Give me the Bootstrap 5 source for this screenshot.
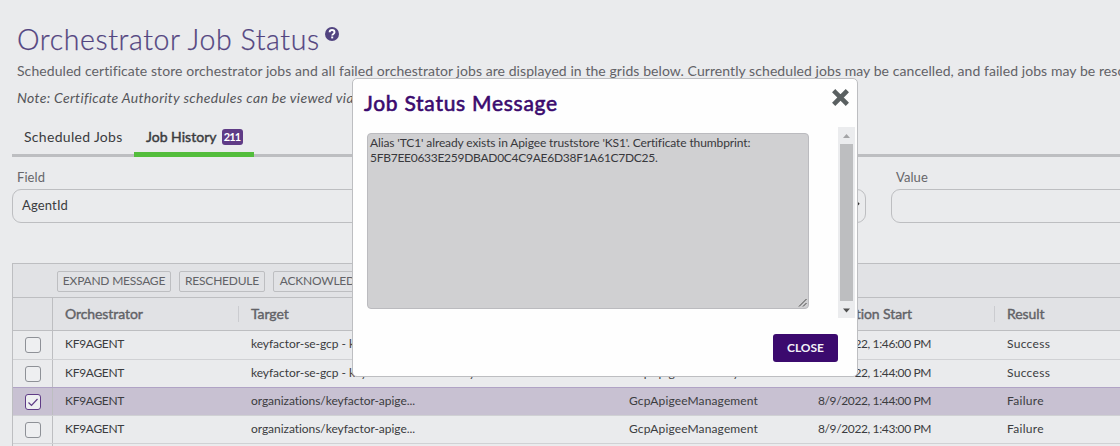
<!DOCTYPE html>
<html lang="en">
<head>
<meta charset="utf-8">
<title>Orchestrator Job Status</title>
<link href="https://cdn.jsdelivr.net/npm/bootstrap@5.3.0/dist/css/bootstrap.min.css" rel="stylesheet">
<style>
body{background:#eaebed;color:#3b3c40;font-family:Lato,"Liberation Sans",sans-serif;font-size:12px;height:446px;overflow:hidden;white-space:nowrap}
.page-body{padding:22px 0 0 12px;height:446px;overflow:hidden}
.page-head{padding-left:5px}
.page-title{color:#524480;font-size:28.5px;font-weight:300;line-height:34px;letter-spacing:.6px;margin:0;-webkit-text-stroke:.25px #524480}
.help-icon{margin:5px 0 0 5px}
.intro{font-size:14px;line-height:20px;color:#626267;letter-spacing:.07px;margin:5px 0 0}
.note{font-size:14px;line-height:20px;color:#55565a;letter-spacing:.33px;margin:7px 0 0}
.job-tabs{height:49px;border-bottom:3px solid #bdbec1}
.job-tabs .nav-link{height:49px;border:0;color:#3b3c40;font-size:14px;line-height:20px;padding:19px 12px 0}
.tab-a{letter-spacing:.31px;width:122px}
.job-tabs .tab-b{width:120px;border-bottom:5px solid #53bd3c!important;letter-spacing:.02px;-webkit-text-stroke:.45px #3b3c40}
.count-badge{background:#5f3b86;border-radius:3px;font-size:11px;line-height:16px;width:21px;height:16px;padding:0;letter-spacing:-.8px;-webkit-text-stroke:0;margin:2px 0 0 5px;flex:none}
.filters{gap:25px;padding-top:11px}
.filter-main{width:854px}
.field-label{font-size:13px;line-height:18px;color:#66666a;padding-left:5px;height:21px;letter-spacing:.07px}
.field-box{height:34px;border:1px solid #bdbec1;border-radius:9px;padding:0 9px;font-size:13px;line-height:31px;letter-spacing:.16px}
.value-box{margin-right:-20px}
.caret{margin:9px -5px 0 0}
.job-grid{border:1px solid #bdbec1;border-width:1px 0 0 1px;margin-top:40px}
.tool-row{height:34px;background:#e1e2e5;border-bottom:1px solid #bdbec1;padding:7px 0 0 44px}
.tool-btn{height:21px;border:1px solid #bdbec1;border-radius:2px;color:#626267;font-size:12px;line-height:16px;padding:0 0 2px;letter-spacing:-.22px}
.btn-expand{width:114px}.btn-again{width:86px}.btn-ack{width:104px}
.grid-line{display:grid;grid-template-columns:40px 186px 378px 189px 189px 1fr;height:28px;border-bottom:1px solid #d0d1d4;line-height:25px}
.grid-line>div{padding-left:12px;overflow:hidden}
.grid-line>div:first-child{padding:6px 0 0 12px;border-right:1px solid #bdbec1}
.grid-line.heads{height:33px;background:#e1e2e5;border-color:#bdbec1;font-size:14px;line-height:31px;color:#626267;letter-spacing:-.08px;-webkit-text-stroke:.4px #626267}
.grid-line.first-row{height:29px}
.grid-line.before-picked{border-color:#b0a3c5}
.grid-line.picked{background:#c8c1d2}
.head-rule{background:linear-gradient(#cbccd0,#cbccd0) right 8px/1px 16px no-repeat}
.head-rule.rule-off{background-position:right 0 top 8px}
.tick-box{display:block;width:16px;height:16px;border:1px solid #8e9197;border-radius:3px;background:#eeeff1}
.picked .tick-box{border-color:#5f3b86}
.agent{letter-spacing:-.3px}.target{letter-spacing:-.05px}.kind{letter-spacing:.13px}.when{letter-spacing:-.38px}.result{letter-spacing:.3px}
.status-dialog{left:352px;top:78px;width:506px;height:299px;background:#fefefe;border:1px solid #bdbec1;border-radius:5px}
.dialog-title{font-size:21px;line-height:26px;font-weight:400;color:#3b0a6e;letter-spacing:.73px;margin:11px 0 0 11px;-webkit-text-stroke:.6px #3b0a6e}
.dialog-x{margin:10px 8px 0 0}
.dialog-main{height:191px;margin-top:11px;padding:6px 2px 0 14px}
.message-box{width:442px;height:176px;background:#d0d0d2;border:1px solid #bbbbbf;border-radius:4px;line-height:15px;padding:1px 2px;color:#38383c;letter-spacing:-.115px}
.message-box .thumb-id{letter-spacing:-.27px}
.grip{right:1px;bottom:1px}
.scroll-track{width:17px;height:191px;background:#ebecee;margin-top:-6px}
.scroll-thumb{width:13px;height:157px;background:#bdbec0}
.scroll-cap{height:17px}
.btn-close-dialog{width:65px;height:28px;background:#3b0a6e;color:#f4f1f8;border-radius:3px;border:0;font-size:12px;font-weight:700;padding:0;line-height:28px;margin:16px 19px 0 0}
</style>
<script src="https://cdn.jsdelivr.net/npm/bootstrap@5.3.0/dist/js/bootstrap.bundle.min.js"></script>
</head>
<body>
<div class="page-body">
  <header class="page-head">
    <div class="d-flex align-items-start">
      <h1 class="page-title">Orchestrator Job Status</h1>
      <svg class="help-icon" width="14" height="14" viewBox="0 0 14 14"><circle cx="7" cy="7" r="7" fill="#524480"/><path d="M4.6 5.300C4.700 3.600 5.800 3 7 3c1.400 0 2.500.8 2.500 2.200C9.500 6.900 7.200 6.900 7.200 8.500" fill="none" stroke="#fff" stroke-width="1.900"/><path d="M6.200 9.500h2v1.900h-2z" fill="#fff"/></svg>
    </div>
    <p class="intro">Scheduled certificate store orchestrator jobs and all failed orchestrator jobs are displayed in the grids below. Currently scheduled jobs may be cancelled, and failed jobs may be resc</p>
    <p class="note fst-italic">Note: Certificate Authority schedules can be viewed via</p>
  </header>
  <nav class="nav job-tabs">
    <a class="nav-link tab-a">Scheduled Jobs</a>
    <a class="nav-link tab-b d-flex">Job History<span class="badge count-badge">211</span></a>
  </nav>
  <div class="filters d-flex">
    <div class="filter-main flex-shrink-0">
      <div class="field-label">Field</div>
      <div class="field-box d-flex justify-content-between">AgentId
        <svg class="caret" width="12" height="12" viewBox="0 0 12 12"><path d="M2 4l4 4 4-4" fill="none" stroke="#333" stroke-width="2"/></svg>
      </div>
    </div>
    <div class="flex-grow-1">
      <div class="field-label">Value</div>
      <div class="field-box value-box"></div>
    </div>
  </div>
  <section class="job-grid">
    <div class="tool-row d-flex gap-2">
      <button class="btn tool-btn btn-expand">EXPAND MESSAGE</button>
      <button class="btn tool-btn btn-again">RESCHEDULE</button>
      <button class="btn tool-btn btn-ack">ACKNOWLEDGE</button>
    </div>
    <div class="grid-line heads">
      <div></div><div class="head-rule rule-off">Orchestrator</div><div class="head-rule">Target</div><div class="head-rule">Type</div><div class="head-rule rule-off">Operation Start</div><div>Result</div>
    </div>
    <div class="grid-line first-row">
      <div><span class="tick-box"></span></div><div class="agent">KF9AGENT</div><div class="target">keyfactor-se-gcp - keyfactor-test-store-key</div><div class="kind">GcpApigeeInventory</div><div class="when">8/9/2022, 1:46:00 PM</div><div class="result">Success</div>
    </div>
    <div class="grid-line before-picked">
      <div><span class="tick-box"></span></div><div class="agent">KF9AGENT</div><div class="target">keyfactor-se-gcp - keyfactor-test-store-key</div><div class="kind">GcpApigeeInventory</div><div class="when">8/9/2022, 1:44:00 PM</div><div class="result">Success</div>
    </div>
    <div class="grid-line picked">
      <div><span class="tick-box"><svg class="d-block" width="14" height="14" viewBox="0 0 14 14"><path d="M2.500 7.500l3 3 6-6.500" fill="none" stroke="#5f3b86" stroke-width="1.200"/></svg></span></div><div class="agent">KF9AGENT</div><div class="target">organizations/keyfactor-apige...</div><div class="kind">GcpApigeeManagement</div><div class="when">8/9/2022, 1:44:00 PM</div><div class="result">Failure</div>
    </div>
    <div class="grid-line">
      <div><span class="tick-box"></span></div><div class="agent">KF9AGENT</div><div class="target">organizations/keyfactor-apige...</div><div class="kind">GcpApigeeManagement</div><div class="when">8/9/2022, 1:43:00 PM</div><div class="result">Failure</div>
    </div>
    <div class="grid-line"><div></div></div>
  </section>
</div>
<div class="status-dialog position-absolute" role="dialog">
  <div class="d-flex justify-content-between">
    <h2 class="dialog-title">Job Status Message</h2>
    <svg class="dialog-x" width="17" height="17" viewBox="0 0 17 17"><path d="M3.300 3.300l10.400 10.400M13.700 3.300L3.300 13.700" stroke="#5a6061" stroke-width="4.600" stroke-linecap="square"/></svg>
  </div>
  <div class="dialog-main d-flex justify-content-between">
    <div class="message-box position-relative">Alias 'TC1' already exists in Apigee truststore 'KS1'. Certificate thumbprint:<br><span class="thumb-id">5FB7EE0633E259DBAD0C4C9AE6D38F1A61C7DC25.</span>
      <svg class="grip position-absolute" width="9" height="9" viewBox="0 0 9 9"><path d="M1 8.500L8.500 1M5 8.500L8.500 5" stroke="#444" fill="none"/></svg>
    </div>
    <div class="scroll-track d-flex flex-column align-items-center">
      <svg class="scroll-cap" width="17" height="17" viewBox="0 0 17 17"><path d="M5 11l3.500-4 3.500 4z" fill="#a3a4a6"/></svg>
      <div class="scroll-thumb"></div>
      <svg class="scroll-cap" width="17" height="17" viewBox="0 0 17 17"><path d="M5 7.500l3.500 4 3.500-4z" fill="#505050"/></svg>
    </div>
  </div>
  <div class="d-flex justify-content-end"><button class="btn btn-close-dialog">CLOSE</button></div>
</div>
</body>
</html>
